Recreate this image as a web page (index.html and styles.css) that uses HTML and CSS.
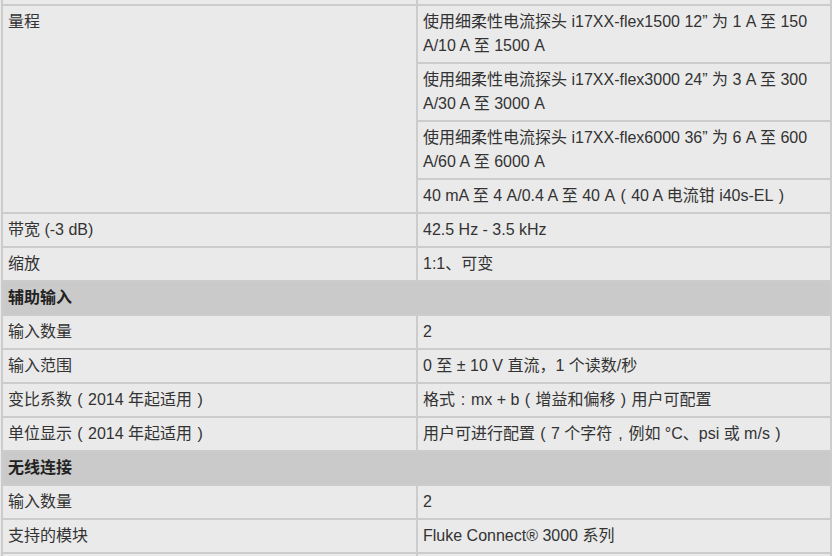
FILE: index.html
```html
<!DOCTYPE html>
<html lang="zh-CN">
<head>
<meta charset="utf-8">
<title>规格</title>
<link rel="stylesheet" href="styles.css">
</head>
<body>
<table class="specs">
  <colgroup>
    <col class="col-label">
    <col class="col-value">
  </colgroup>
  <tbody>
    <tr><td>&nbsp;</td><td>&nbsp;</td></tr>
    <tr>
      <td rowspan="4">量程</td>
      <td>使用细柔性电流探头 i17XX-flex1500 12” 为 1 A 至 150 A/10 A 至 1500 A</td>
    </tr>
    <tr><td>使用细柔性电流探头 i17XX-flex3000 24” 为 3 A 至 300 A/30 A 至 3000 A</td></tr>
    <tr><td>使用细柔性电流探头 i17XX-flex6000 36” 为 6 A 至 600 A/60 A 至 6000 A</td></tr>
    <tr><td>40 mA 至 4 A/0.4 A 至 40 A<span class="fw">(</span>40 A 电流钳 i40s-EL<span class="fw">)</span></td></tr>
    <tr><td>带宽 (-3 dB)</td><td>42.5 Hz - 3.5 kHz</td></tr>
    <tr><td>缩放</td><td>1:1、可变</td></tr>
    <tr class="section"><th colspan="2">辅助输入</th></tr>
    <tr><td>输入数量</td><td>2</td></tr>
    <tr><td>输入范围</td><td>0 至 ± 10 V 直流，1 个读数/秒</td></tr>
    <tr><td>变比系数<span class="fw">(</span>2014 年起适用<span class="fw">)</span></td><td>格式<span class="fw">:</span>mx + b<span class="fw">(</span>增益和偏移<span class="fw">)</span>用户可配置</td></tr>
    <tr><td>单位显示<span class="fw">(</span>2014 年起适用<span class="fw">)</span></td><td>用户可进行配置<span class="fw">(</span>7 个字符<span class="fw">,</span>例如 °C、psi 或 m/s<span class="fw">)</span></td></tr>
    <tr class="section"><th colspan="2">无线连接</th></tr>
    <tr><td>输入数量</td><td>2</td></tr>
    <tr><td>支持的模块</td><td>Fluke Connect® 3000 系列</td></tr>
    <tr><td>&nbsp;</td><td>&nbsp;</td></tr>
  </tbody>
</table>
</body>
</html>
```

FILE: styles.css
```css
html, body {
  margin: 0;
  padding: 0;
  background: #eaeaea;
  overflow: hidden;
}

body {
  font-family: "Liberation Sans", Arial, "Noto Sans CJK SC", sans-serif;
  font-size: 16px;
  line-height: 24px;
  color: #333333;
}

.specs {
  margin: -30px 0 0 1px;
  width: 831px;
  table-layout: fixed;
  border-collapse: separate;
  border-spacing: 2px;
  background: #cccccc;
}

.col-label {
  width: 413px;
}

.col-value {
  width: 412px;
}

.specs td,
.specs th {
  background: #eaeaea;
  padding: 4px 5px 4px 5px;
  vertical-align: top;
  text-align: left;
  font-weight: normal;
}

.specs .section th {
  background: #cacaca;
  font-weight: bold;
  color: #222222;
}

/* full-width punctuation, glyph centred in a 1em box */
.fw {
  display: inline-block;
  width: 1em;
  text-align: center;
}
```
